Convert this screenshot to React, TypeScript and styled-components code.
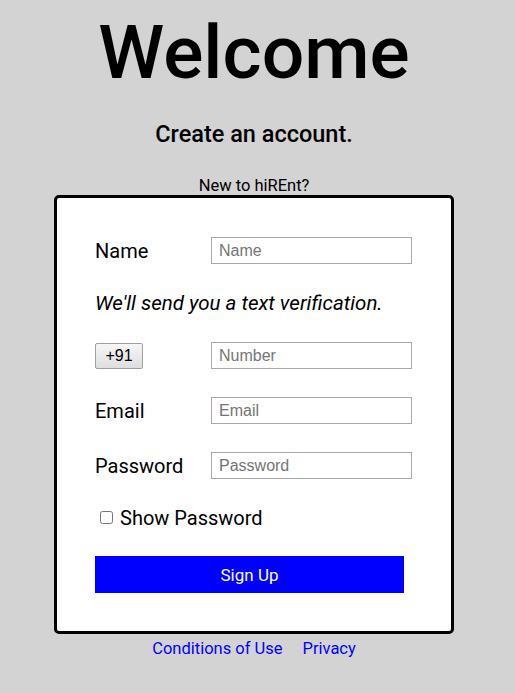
import React from "react";
import styled, { createGlobalStyle } from "styled-components";

const Global = createGlobalStyle`
  html, body { margin: 0; padding: 0; background: #d3d3d3; }
  body { font-family: Roboto, "Noto Sans", sans-serif; color: #000; }
`;

const Page = styled.div`
  width: 508px;
  display: flex;
  flex-direction: column;
  align-items: center;
`;

const Title = styled.h1`
  margin: 12px 0 0;
  font-size: 75px;
  font-weight: 500;
  line-height: 80px;
`;

const Subtitle = styled.h2`
  margin: 28px 0 0;
  font-size: 23.5px;
  font-weight: 500;
  line-height: 28px;
`;

const Intro = styled.p`
  margin: 28px 0 0;
  font-size: 16.5px;
  line-height: 19px;
`;

const Card = styled.form`
  box-sizing: border-box;
  width: 400px;
  margin-top: 0;
  border: 3px solid #000;
  border-radius: 5px;
  background: #fff;
  padding: 39px 38px 38px;
  display: flex;
  flex-direction: column;
`;

const Row = styled.div`
  display: flex;
  align-items: center;
  height: 27px;
  margin-bottom: 28px;
`;

const Label = styled.label`
  width: 116px;
  font-size: 20px;
`;

const LabelCell = styled.div`
  width: 116px;
  display: flex;
`;

const Input = styled.input`
  box-sizing: border-box;
  width: 201px;
  height: 27px;
  border: 1px solid #a9a9a9;
  padding: 0 7px;
  font-family: "Liberation Sans", Arial, sans-serif;
  font-size: 16px;
  color: #000;
  background: #fff;
  &::placeholder { color: #757575; }
  &:focus { outline: none; }
`;

const Note = styled.p`
  margin: 0 0 27px;
  font-size: 20.5px;
  font-style: italic;
  line-height: 23px;
`;

const CodeButton = styled.button`
  box-sizing: border-box;
  width: 48px;
  height: 26px;
  padding: 0;
  border: 1px solid #a0a0a0;
  border-radius: 2px;
  background: linear-gradient(#f6f6f6, #dedede);
  font-family: "Liberation Sans", Arial, sans-serif;
  font-size: 16px;
  color: #000;
`;

const CheckRow = styled.label`
  display: flex;
  align-items: center;
  font-size: 20px;
  height: 27px;
  margin: -3px 0 25px;
`;

const Check = styled.input`
  width: 13px;
  height: 13px;
  margin: 0 7px 0 5px;
`;

const Submit = styled.button`
  width: 309px;
  height: 37px;
  border: none;
  background: #0000ff;
  color: #fff;
  font-family: Roboto, sans-serif;
  font-size: 17px;
  cursor: pointer;
`;

const Footer = styled.div`
  display: flex;
  gap: 20px;
  margin-top: 5px;
  font-size: 16.5px;
`;

const Link = styled.a`
  color: #0000ff;
  text-decoration: none;
`;

export default function App() {
  return (
    <>
      <Global />
      <Page>
        <Title>Welcome</Title>
        <Subtitle>Create an account.</Subtitle>
        <Intro>New to hiREnt?</Intro>
        <Card onSubmit={(e) => e.preventDefault()}>
          <Row>
            <Label>Name</Label>
            <Input placeholder="Name" />
          </Row>
          <Note>We'll send you a text verification.</Note>
          <Row>
            <LabelCell>
              <CodeButton type="button">+91</CodeButton>
            </LabelCell>
            <Input placeholder="Number" />
          </Row>
          <Row>
            <Label>Email</Label>
            <Input placeholder="Email" type="email" />
          </Row>
          <Row>
            <Label>Password</Label>
            <Input placeholder="Password" type="password" />
          </Row>
          <CheckRow>
            <Check type="checkbox" />
            Show Password
          </CheckRow>
          <Submit type="submit">Sign Up</Submit>
        </Card>
        <Footer>
          <Link href="#">Conditions of Use</Link>
          <Link href="#">Privacy</Link>
        </Footer>
      </Page>
    </>
  );
}
